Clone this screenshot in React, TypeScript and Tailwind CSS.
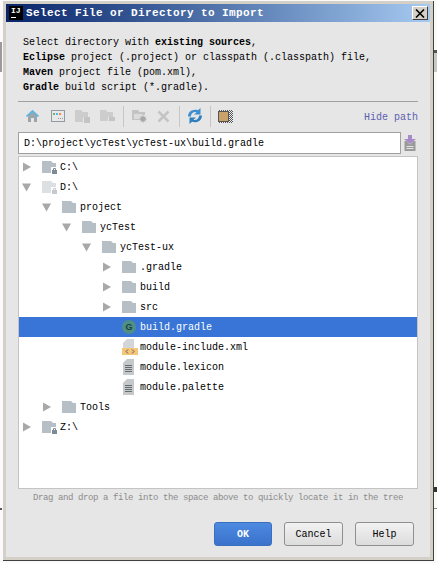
import React from "react";

const mono = { fontFamily: '"Liberation Mono", monospace' };

function Chevron({ open }: { open: boolean }) {
  return (
    <svg width="10" height="10" viewBox="0 0 10 10" className="shrink-0 overflow-visible">
      {open ? <polygon points="-1,1.5 8,1.5 3.5,9.5" fill="#a8a8a8" /> : <polygon points="0,0.5 8,5 0,9.5" fill="#a8a8a8" />}
    </svg>
  );
}

function Folder({ faded = false, lock = false }: { faded?: boolean; lock?: boolean }) {
  const c = faded ? "#dce0e3" : "#b7bfc6";
  const l = faded ? "#c4cad0" : "#7d8a97";
  return (
    <svg width="16" height="14" viewBox="0 0 16 14" className="shrink-0">
      <path d="M0 1h9l2 2h3v10H0z" fill={c} />
      {lock && (
        <g>
          <rect x="9" y="7" width="7" height="7" fill="#fff" />
          <rect x="10" y="10" width="5" height="4" fill={l} />
          <path d="M11.5 10V8.5h2V10" fill="none" stroke={l} />
        </g>
      )}
    </svg>
  );
}

function DocIcon() {
  return (
    <svg width="14" height="16" viewBox="0 0 14 16" className="shrink-0">
      <path d="M1 4l4-4h7v16H1z" fill="#c6c9cc" />
      <path d="M3 6.5h7M3 8.5h7M3 10.5h7M3 12.5h7" stroke="#666b70" strokeWidth="1" />
    </svg>
  );
}

function XmlIcon() {
  return (
    <svg width="16" height="16" viewBox="0 0 16 16" className="shrink-0">
      <path d="M1 4l4-4h7v10H1z" fill="#d3d6d8" />
      <rect x="0" y="9" width="16" height="7" fill="#f5c678" />
      <path d="M6 10.5l-2 2 2 2M10 10.5l2 2-2 2" fill="none" stroke="#5a5a5a" />
    </svg>
  );
}

function GradleIcon() {
  return (
    <svg width="14" height="14" viewBox="0 0 14 14" className="shrink-0">
      <circle cx="7" cy="7" r="7" fill="#4f8f87" />
      <text x="7" y="10.2" textAnchor="middle" fontSize="9" fontWeight="700" fontFamily="Liberation Sans" fill="#17423e">G</text>
    </svg>
  );
}

type Row = {
  depth: number;
  label: string;
  arrow?: "open" | "closed";
  icon: React.ReactNode;
  selected?: boolean;
};

const rows: Row[] = [
  { depth: 0, label: "C:\\", arrow: "closed", icon: <Folder lock /> },
  { depth: 0, label: "D:\\", arrow: "open", icon: <Folder faded lock /> },
  { depth: 1, label: "project", arrow: "open", icon: <Folder /> },
  { depth: 2, label: "ycTest", arrow: "open", icon: <Folder /> },
  { depth: 3, label: "ycTest-ux", arrow: "open", icon: <Folder /> },
  { depth: 4, label: ".gradle", arrow: "closed", icon: <Folder /> },
  { depth: 4, label: "build", arrow: "closed", icon: <Folder /> },
  { depth: 4, label: "src", arrow: "closed", icon: <Folder /> },
  { depth: 4, label: "build.gradle", icon: <GradleIcon />, selected: true },
  { depth: 4, label: "module-include.xml", icon: <XmlIcon /> },
  { depth: 4, label: "module.lexicon", icon: <DocIcon /> },
  { depth: 4, label: "module.palette", icon: <DocIcon /> },
  { depth: 1, label: "Tools", arrow: "closed", icon: <Folder /> },
  { depth: 0, label: "Z:\\", arrow: "closed", icon: <Folder lock /> },
];

const indent = ["pl-[4px]", "pl-[24px]", "pl-[44px]", "pl-[64px]", "pl-[84px]"];

function TreeRow({ r }: { r: Row }) {
  return (
    <div className={`flex h-5 items-center ${indent[r.depth]} ${r.selected ? "bg-[#3875d7] text-white" : "text-black"}`}>
      <span className="flex w-[19px] shrink-0 items-center">
        {r.arrow && <Chevron open={r.arrow === "open"} />}
      </span>
      <span className="flex w-[18px] shrink-0 justify-start">{r.icon}</span>
      <span className="whitespace-pre pt-[1px]">{r.label}</span>
    </div>
  );
}

function Sep() {
  return <div className="ml-[3px] mr-[2px] h-[21px] w-px bg-[#c6c6c6]" />;
}

function Tool({ children }: { children: React.ReactNode }) {
  return <div className="flex h-[22px] w-[25px] items-center justify-center">{children}</div>;
}

function Btn({ children, primary = false }: { children: React.ReactNode; primary?: boolean }) {
  return (
    <div
      className={
        primary
          ? "flex h-6 w-[58px] items-center justify-center rounded-[3px] border border-[#3a6fc0] bg-gradient-to-b from-[#4d8ae0] to-[#3a72cc] pt-[1px] font-bold text-white"
          : "flex h-6 w-[59px] items-center justify-center rounded-[3px] border border-[#8f8f8f] bg-gradient-to-b from-[#f2f2f2] to-[#dcdcdc] pt-[1px] text-black"
      }
    >
      {children}
    </div>
  );
}

export default function App() {
  return (
    <div className="relative h-[563px] w-[437px] overflow-hidden bg-[#fafafa] pl-[3px] pt-[1px]" style={mono}>
      <div className="absolute left-0 top-[42px] h-[30px] w-[2px] bg-[#9a9a9a]" />
      <div className="absolute left-0 top-[508px] h-[2px] w-[2px] bg-[#555555]" />
      <div className="absolute right-0 top-[50px] h-[3px] w-[3px] bg-[#555555]" />
      <div className="absolute right-0 top-[53px] h-[19px] w-[3px] bg-[#c8c8c8]" />
      <div className="absolute right-0 top-[487px] h-[5px] w-[3px] bg-[#333333]" />
      <div className="absolute right-0 top-[508px] h-[1px] w-[3px] bg-[#8a8a8a]" />
      <div className="flex h-[560px] w-[431px] flex-col border-b-[1px] border-r-[1px] border-[#404040] bg-[#d4d0c8] pb-[3px] pl-[3px] pr-[3px] pt-[3px]">
        <div className="flex h-[18px] shrink-0 items-center bg-gradient-to-r from-[#0a246a] to-[#a6caf0] pl-[3px] pr-[2px]">
          <div className="flex h-[14px] w-[14px] shrink-0 flex-col bg-black pl-[2px] pt-[1px] text-[8px] font-bold leading-[8px] text-white">
            <span>IJ</span>
            <span className="mt-[2px] h-px w-[5px] bg-white" />
          </div>
          <span className="ml-[3px] pt-[1px] text-[11px] font-bold tracking-[0.4px] text-white">
            Select File or Directory to Import
          </span>
          <div className="ml-auto flex h-[14px] w-[16px] items-center justify-center border border-t-white border-l-white border-r-[#404040] border-b-[#404040] bg-[#d4d0c8]">
            <svg width="10" height="9" viewBox="0 0 10 9">
              <path d="M1 0.5l8 8M9 0.5l-8 8" stroke="#000" strokeWidth="1.6" />
            </svg>
          </div>
        </div>

        <div className="flex min-h-0 flex-1 flex-col bg-[#e6e6e6] pl-[12px] pr-[12px] text-[10px] leading-[15px] text-black">
          <div className="pl-[5px] pt-[13px]">
            <p>Select directory with <b>existing sources</b>,</p>
            <p><b>Eclipse</b> project (.project) or classpath (.classpath) file,</p>
            <p><b>Maven</b> project file (pom.xml),</p>
            <p><b>Gradle</b> build script (*.gradle).</p>
          </div>
          <div className="mt-[6px] h-px bg-[#a0a0a0]" />
          <div className="mt-[3px] flex h-[22px] items-center pl-[2px]">
            <Tool>
              <svg width="13" height="12" viewBox="0 0 13 12">
                <path d="M6.5 0L0 6h2v6h3V8h3v4h3V6h2z" fill="#9aa5ad" />
                <path d="M6.5 0L0 6l1 1 5.5-5L12 7l1-1z" fill="#55b8e6" />
              </svg>
            </Tool>
            <Tool>
              <svg width="14" height="12" viewBox="0 0 14 12">
                <rect x="0.5" y="0.5" width="13" height="11" fill="#e8e8e8" stroke="#8f9aa3" />
                <rect x="2" y="3" width="2" height="2" fill="#6fb76f" />
                <rect x="5" y="3" width="2" height="2" fill="#55b8e6" />
                <rect x="8" y="3" width="2" height="2" fill="#ee8a5a" />
                <path d="M7 8.5h1M9 8.5h1M11 8.5h1" stroke="#999" />
              </svg>
            </Tool>
            <Tool>
              <svg width="15" height="14" viewBox="0 0 15 14">
                <path d="M0 1h6l1.5 2H13v5H8v5H0z" fill="#cdcdcd" />
                <rect x="9" y="8" width="6" height="6" fill="#c4c4c4" />
              </svg>
            </Tool>
            <Tool>
              <svg width="15" height="14" viewBox="0 0 15 14">
                <path d="M0 1h6l1.5 2H13v5H8v4H0z" fill="#cdcdcd" />
                <rect x="9" y="8" width="6" height="4" fill="#c4c4c4" />
              </svg>
            </Tool>
            <Sep />
            <Tool>
              <svg width="16" height="14" viewBox="0 0 16 14">
                <path d="M1 1h6l1.5 2H14v3H9v5H1z" fill="#c4c4c4" />
                <path d="M3 5h8v5H3z" fill="#dcdcdc" />
                <path d="M12 6l1 2 2-1-1 2 2 1-2 1 1 2-2-1-1 2-1-2-2 1 1-2-2-1 2-1-1-2 2 1z" fill="#a8a8a8" />
              </svg>
            </Tool>
            <Tool>
              <svg width="13" height="13" viewBox="0 0 13 13">
                <path d="M1.5 1.5l10 10M11.5 1.5l-10 10" stroke="#c4c4c4" strokeWidth="2.6" />
              </svg>
            </Tool>
            <Sep />
            <Tool>
              <svg width="16" height="16" viewBox="0 0 16 16">
                <path d="M1 8.5C1 3.5 6 0.5 11 2.2L13.5 0V6.5H7L9.5 4.2C6.5 3.4 4 5.5 3.8 8.5z" fill="#3f8ed0" />
                <path d="M15 7.5C15 12.5 10 15.5 5 13.8L2.5 16V9.5H9L6.5 11.8C9.5 12.6 12 10.5 12.2 7.5z" fill="#2f7fbf" />
              </svg>
            </Tool>
            <Sep />
            <Tool>
              <div className="flex h-[13px] w-[15px] items-center bg-[repeating-conic-gradient(#555_0%_25%,#eee_0%_50%)] bg-[length:2px_2px]">
                <div className="h-[11px] w-[11px] border border-[#555] bg-[#c9a26a]" />
              </div>
            </Tool>
            <span className="ml-auto pt-[3px] text-[#5c5fb0]">Hide path</span>
          </div>

          <div className="mt-[5px] flex h-[22px] items-center">
            <div className="flex h-[22px] w-[383px] items-center border border-[#a0a0a0] bg-white pl-[5px] pt-[1px]">
              D:\project\ycTest\ycTest-ux\build.gradle
            </div>
            <svg width="12" height="16" viewBox="0 0 12 16" className="ml-[3px]">
              <path d="M4 0h4v4h4L6 9 0 4h4z" fill="#a98ac9" />
              <path d="M0.5 6h2L6 9.5 9.5 6h2v10H0.5z" fill="#9a9a9a" />
              <path d="M2.5 11.5h7M2.5 13.5h7" stroke="#e4e4e4" />
            </svg>
          </div>

          <div className="mt-[2px] h-[333px] w-[400px] shrink-0 overflow-hidden border border-[#c4c4c4] bg-white">
            {rows.map((r) => (
              <TreeRow key={r.label} r={r} />
            ))}
          </div>

          <div className="h-[16px] whitespace-pre pl-[15px] pt-[1px] text-[9px] leading-[16px] tracking-[-0.4px] text-[#8c8c8c]">
            Drag and drop a file into the space above to quickly locate it in the tree
          </div>

          <div className="mt-[17px] flex gap-[12px] pl-[196px]">
            <Btn primary>OK</Btn>
            <Btn>Cancel</Btn>
            <Btn>Help</Btn>
          </div>
        </div>
      </div>
    </div>
  );
}
